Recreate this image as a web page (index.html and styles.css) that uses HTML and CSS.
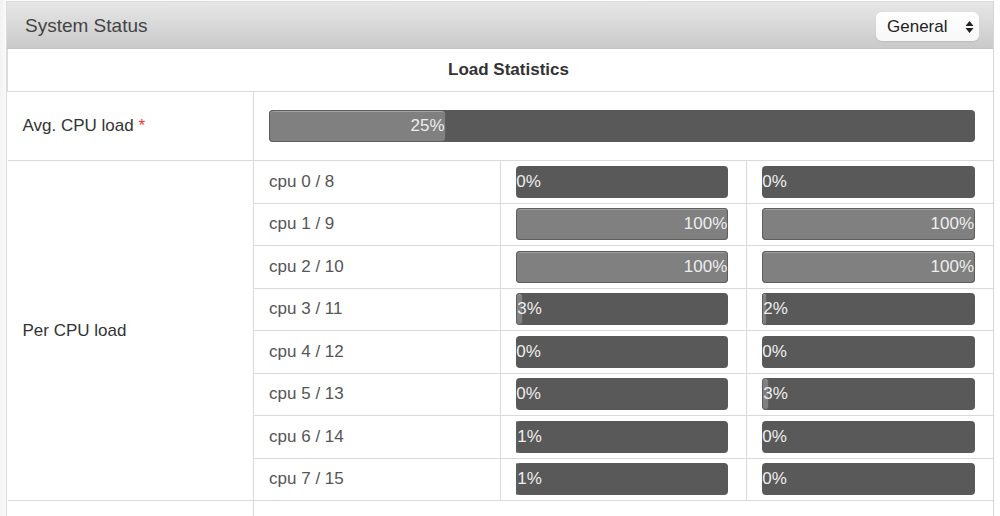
FILE: index.html
```html
<!DOCTYPE html>
<html lang="en">
<head>
<meta charset="utf-8">
<title>System Status</title>
<link rel="stylesheet" href="styles.css">
</head>
<body>
<div class="page">
  <section class="panel">
    <header class="panel-head">
      <h1 class="panel-title">System Status</h1>
      <div class="select">
        <span>General</span>
        <svg class="select-arrows" width="9" height="14" viewBox="0 0 9 14"><path d="M4.5 1 L8.5 6 H0.5 Z M4.5 13 L0.5 8 H8.5 Z" fill="#222"/></svg>
      </div>
    </header>
    <table class="stats">
      <colgroup>
        <col class="c-label"><col class="c-cpu"><col class="c-bar"><col class="c-bar">
      </colgroup>
      <tr class="row-title"><th colspan="4">Load Statistics</th></tr>
      <tr class="row-avg">
        <td class="label">Avg. CPU load <span class="req">*</span></td>
        <td colspan="3" class="bar-cell"><div class="bar"><div class="fill" style="width:25%">25%</div></div></td>
      </tr>
      <tr class="row-cpu">
        <td class="label" rowspan="8">Per CPU load</td>
        <td class="cpu">cpu 0 / 8</td>
        <td class="bar-cell"><div class="bar"><div class="fill empty" style="width:0%">0%</div></div></td>
        <td class="bar-cell"><div class="bar"><div class="fill empty" style="width:0%">0%</div></div></td>
      </tr>
      <tr class="row-cpu">
        <td class="cpu">cpu 1 / 9</td>
        <td class="bar-cell"><div class="bar"><div class="fill" style="width:100%">100%</div></div></td>
        <td class="bar-cell"><div class="bar"><div class="fill" style="width:100%">100%</div></div></td>
      </tr>
      <tr class="row-cpu">
        <td class="cpu">cpu 2 / 10</td>
        <td class="bar-cell"><div class="bar"><div class="fill" style="width:100%">100%</div></div></td>
        <td class="bar-cell"><div class="bar"><div class="fill" style="width:100%">100%</div></div></td>
      </tr>
      <tr class="row-cpu">
        <td class="cpu">cpu 3 / 11</td>
        <td class="bar-cell"><div class="bar"><div class="fill" style="width:3%">3%</div></div></td>
        <td class="bar-cell"><div class="bar"><div class="fill" style="width:2%">2%</div></div></td>
      </tr>
      <tr class="row-cpu">
        <td class="cpu">cpu 4 / 12</td>
        <td class="bar-cell"><div class="bar"><div class="fill empty" style="width:0%">0%</div></div></td>
        <td class="bar-cell"><div class="bar"><div class="fill empty" style="width:0%">0%</div></div></td>
      </tr>
      <tr class="row-cpu">
        <td class="cpu">cpu 5 / 13</td>
        <td class="bar-cell"><div class="bar"><div class="fill empty" style="width:0%">0%</div></div></td>
        <td class="bar-cell"><div class="bar"><div class="fill" style="width:3%">3%</div></div></td>
      </tr>
      <tr class="row-cpu">
        <td class="cpu">cpu 6 / 14</td>
        <td class="bar-cell"><div class="bar"><div class="fill" style="width:1%">1%</div></div></td>
        <td class="bar-cell"><div class="bar"><div class="fill empty" style="width:0%">0%</div></div></td>
      </tr>
      <tr class="row-cpu">
        <td class="cpu">cpu 7 / 15</td>
        <td class="bar-cell"><div class="bar"><div class="fill" style="width:1%">1%</div></div></td>
        <td class="bar-cell"><div class="bar"><div class="fill empty" style="width:0%">0%</div></div></td>
      </tr>
      <tr class="row-next">
        <td class="label"></td>
        <td colspan="3"></td>
      </tr>
    </table>
  </section>
</div>
</body>
</html>
```
FILE: styles.css
```css
html, body {
  margin: 0;
  padding: 0;
}

body {
  background: #f6f6f6;
  font-family: "Liberation Sans", Arial, sans-serif;
  color: #333;
  overflow: hidden;
}

.page {
  padding: 1px 6px 0 6px;
  background: linear-gradient(to right, #f2f2f2 0, #fafafa 6px, #fff 100%);
}

.panel {
  background: #fff;
  border: 1px solid #dcdcdc;
  border-right: 1px solid #d6d6d6;
  width: 986px;
}

.panel-head {
  height: 46px;
  display: flex;
  align-items: center;
  justify-content: space-between;
  padding: 0 14px 0 18px;
  background: linear-gradient(to bottom, #e6e6e6 0%, #d7d7d7 55%, #c9c9c9 100%);
  border-bottom: 1px solid #c4c4c4;
}

.panel-title {
  margin: 0;
  font-size: 19px;
  font-weight: normal;
  color: #444;
  padding-top: 1px;
}

.select {
  display: flex;
  align-items: center;
  justify-content: space-between;
  width: 87px;
  height: 29px;
  padding: 0 5px 0 11px;
  background: linear-gradient(to bottom, #ffffff 0%, #f7f7f7 100%);
  border-radius: 6px;
  box-shadow: 0 1px 1px rgba(0,0,0,0.08);
  font-size: 17px;
  color: #222;
  margin-top: 3px;
}

.select-arrows {
  display: block;
}

.stats {
  width: 100%;
  border-collapse: collapse;
  table-layout: fixed;
  font-size: 17px;
}

.c-label { width: 246px; }
.c-cpu { width: 247px; }
.c-bar { width: 246px; }

.stats th,
.stats td {
  border: 1px solid #dadada;
  padding: 0;
}

.stats tr:first-child th { border-top: none; }
.stats td:first-child { border-left: none; }
.stats td:last-child, .stats th { border-right: none; }

.row-title th {
  height: 42px;
  padding-left: 16px;
  font-weight: bold;
  color: #333;
  font-size: 17px;
  text-align: center;
}

.row-avg td { height: 68px; }

.row-cpu td { height: 41.5px; }

.label {
  padding-left: 15px !important;
  color: #333;
  vertical-align: middle;
}

.req { color: #e33; }

.cpu {
  padding-left: 15px !important;
  color: #555;
}

.bar-cell {
  padding: 0 18px 0 15px !important;
  vertical-align: middle;
}

.bar {
  height: 32px;
  border-radius: 4px;
  background: #595959;
  overflow: visible;
  display: flex;
}

.fill {
  box-sizing: border-box;
  height: 32px;
  background: #808080;
  border: 1px solid #5e5e5e;
  border-radius: 4px;
  box-shadow: inset 0 1px 0 rgba(255,255,255,0.25);
  color: #eee;
  font-size: 17px;
  line-height: 30px;
  text-align: right;
  white-space: nowrap;
}

.fill.empty {
  border: none;
  box-shadow: none;
  background: transparent;
  line-height: 32px;
}

.row-next td { height: 30px; }
```
